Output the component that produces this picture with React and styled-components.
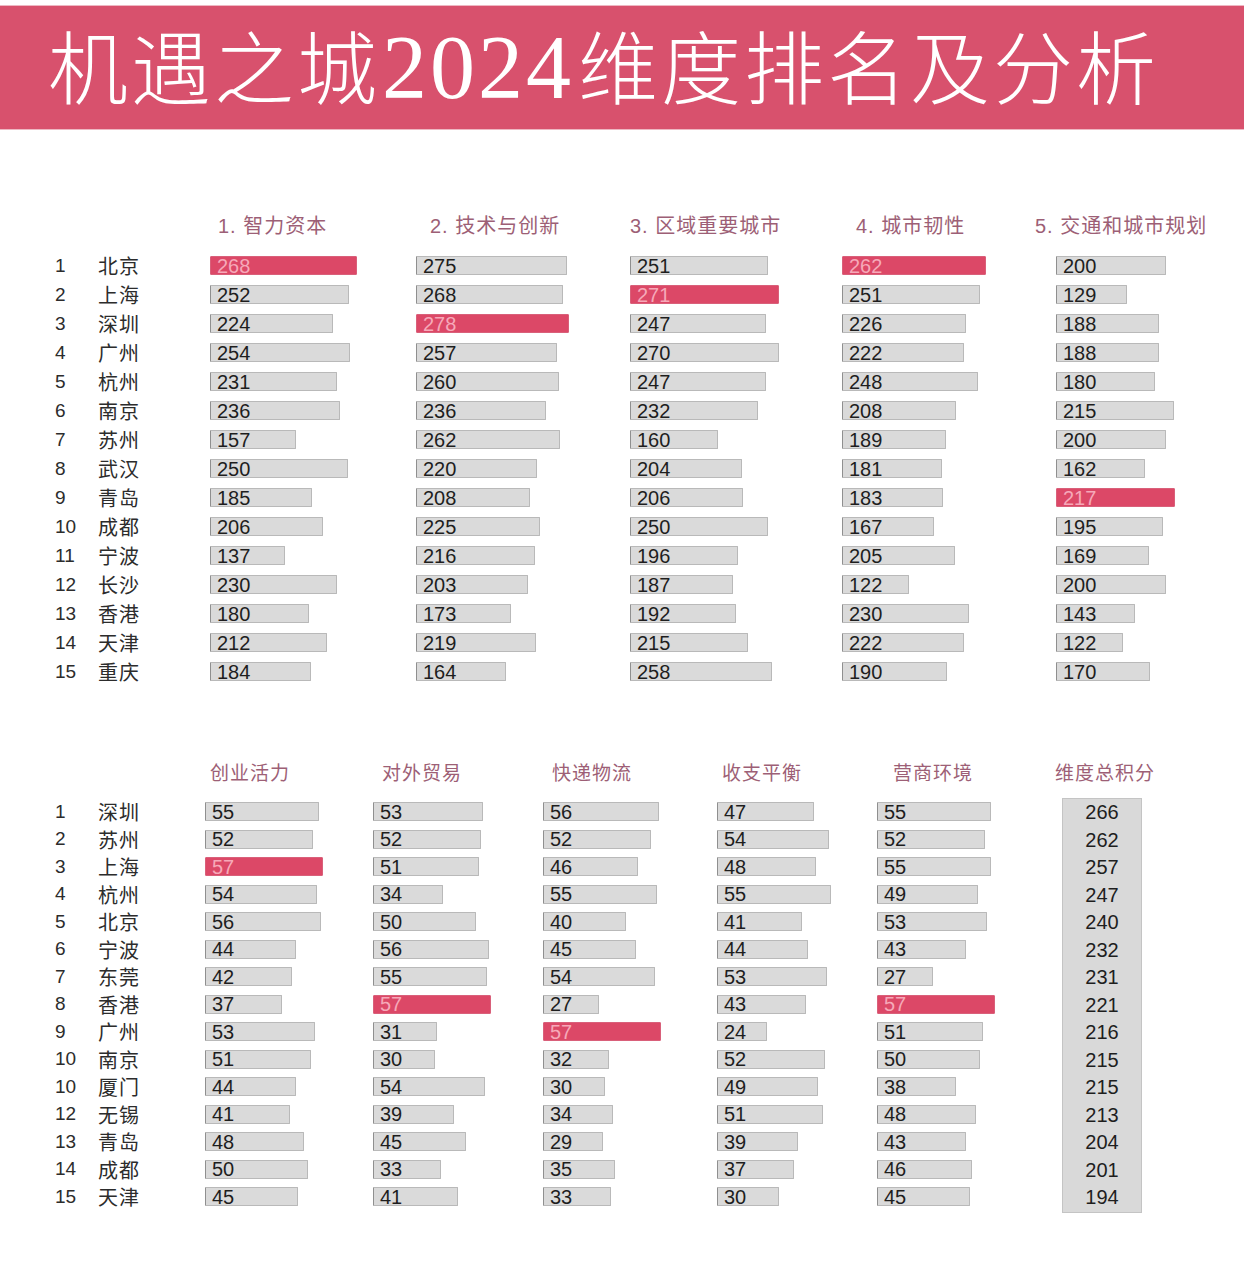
import React from 'react';
import styled, { createGlobalStyle } from 'styled-components';

const GlobalStyle = createGlobalStyle`
  body {
    margin: 0;
    background: #fff;
    font-family: 'Liberation Sans', 'Noto Sans CJK SC', sans-serif;
  }
`;

const Page = styled.div`
  width: 1244px;
  height: 1277px;
  padding-top: 5px;
  box-sizing: border-box;
  background: #fff;
`;

const Banner = styled.header`
  height: 125px;
  background: #d8516d;
  border-top: 1px solid #eeb7c2;
  border-bottom: 1px solid #eeb7c2;
  box-sizing: border-box;
  display: flex;
  align-items: center;
  padding-left: 48px;
  overflow: hidden;
`;

const Title = styled.h1`
  margin: 0;
  color: #fff;
  font-family: 'Noto Sans CJK SC', sans-serif;
  font-weight: 300;
  font-size: 80px;
  line-height: 1;
  letter-spacing: 3px;
  white-space: nowrap;
  display: flex;
  align-items: baseline;
`;

const Year = styled.span`
  font-family: 'Liberation Serif', 'DejaVu Serif', serif;
  font-weight: 400;
  font-size: 90px;
  letter-spacing: 3px;
  margin: 0 4px 0 2px;
`;

const Table = styled.section`
  display: flex;
  padding-left: 55px;
  margin-top: ${({ $top }) => $top}px;
`;

const Column = styled.div`
  display: flex;
  flex-direction: column;
  width: ${({ $w }) => ($w ? `${$w}px` : 'auto')};
  flex: ${({ $w }) => ($w ? 'none' : '1')};
`;

const Head = styled.div`
  height: ${({ $h }) => $h}px;
  line-height: 30px;
  padding-left: ${({ $offset }) => Math.max($offset || 0, 0)}px;
  margin-left: ${({ $offset }) => Math.min($offset || 0, 0)}px;
  font-family: 'Liberation Sans', 'Noto Sans CJK SC', sans-serif;
  font-size: ${({ $fs }) => $fs}px;
  letter-spacing: 1px;
  color: #9d5f76;
  white-space: nowrap;
`;

const Label = styled.div`
  height: ${({ $h }) => $h}px;
  display: flex;
  align-items: center;
  font-size: ${({ $cjk }) => ($cjk ? 20 : 19)}px;
  letter-spacing: ${({ $cjk }) => ($cjk ? 1 : 0)}px;
  color: #2c2c2c;
  font-family: 'Liberation Sans', 'Noto Sans CJK SC', sans-serif;
`;

const Row = styled.div`
  height: ${({ $h }) => $h}px;
  display: flex;
  align-items: center;
`;

const Bar = styled.div`
  height: 19px;
  box-sizing: border-box;
  display: flex;
  align-items: center;
  padding-left: 6px;
  font-size: 20px;
  line-height: 1;
  background: ${({ $hot }) => ($hot ? '#dc4867' : '#dadada')};
  border: 1px solid ${({ $hot }) => ($hot ? '#d9607a' : '#b9b9b9')};
  border-left-color: ${({ $hot }) => ($hot ? '#d9607a' : '#8f8f8f')};
  color: ${({ $hot }) => ($hot ? '#f6a9b9' : '#1e1e1e')};
  border-radius: 1px;
`;

const TotalBox = styled.div`
  width: 80px;
  margin-left: 7px;
  background: #d9d9d9;
  border: 1px solid #c4c4c4;
  box-sizing: border-box;
  display: flex;
  flex-direction: column;
  margin-top: 3px;
`;

const TotalValue = styled.div`
  height: ${({ $h }) => $h}px;
  display: flex;
  align-items: center;
  justify-content: center;
  font-size: 20px;
  color: #1e1e1e;
`;

const topCities = ['北京', '上海', '深圳', '广州', '杭州', '南京', '苏州', '武汉', '青岛', '成都', '宁波', '长沙', '香港', '天津', '重庆'];
const topRanks = Array.from({ length: 15 }, (_, i) => i + 1);

const topColumns = [
  { title: '1. 智力资本', w: 206, offset: 8, values: [268, 252, 224, 254, 231, 236, 157, 250, 185, 206, 137, 230, 180, 212, 184] },
  { title: '2. 技术与创新', w: 214, offset: 14, values: [275, 268, 278, 257, 260, 236, 262, 220, 208, 225, 216, 203, 173, 219, 164] },
  { title: '3. 区域重要城市', w: 212, offset: 0, values: [251, 271, 247, 270, 247, 232, 160, 204, 206, 250, 196, 187, 192, 215, 258] },
  { title: '4. 城市韧性', w: 214, offset: 14, values: [262, 251, 226, 222, 248, 208, 189, 181, 183, 167, 205, 122, 230, 222, 190] },
  { title: '5. 交通和城市规划', w: 0, offset: -21, values: [200, 129, 188, 188, 180, 215, 200, 162, 217, 195, 169, 200, 143, 122, 170] },
];

const bottomCities = ['深圳', '苏州', '上海', '杭州', '北京', '宁波', '东莞', '香港', '广州', '南京', '厦门', '无锡', '青岛', '成都', '天津'];
const bottomRanks = [1, 2, 3, 4, 5, 6, 7, 8, 9, 10, 10, 12, 13, 14, 15];

const bottomColumns = [
  { title: '创业活力', w: 168, offset: 5, hot: true, values: [55, 52, 57, 54, 56, 44, 42, 37, 53, 51, 44, 41, 48, 50, 45] },
  { title: '对外贸易', w: 170, offset: 9, hot: true, values: [53, 52, 51, 34, 50, 56, 55, 57, 31, 30, 54, 39, 45, 33, 41] },
  { title: '快递物流', w: 174, offset: 9, hot: true, values: [56, 52, 46, 55, 40, 45, 54, 27, 57, 32, 30, 34, 29, 35, 33] },
  { title: '收支平衡', w: 160, offset: 5, hot: false, values: [47, 54, 48, 55, 41, 44, 53, 43, 24, 52, 49, 51, 39, 37, 30] },
  { title: '营商环境', w: 178, offset: 16, hot: true, values: [55, 52, 55, 49, 53, 43, 27, 57, 51, 50, 38, 48, 43, 46, 45] },
];

const totals = [266, 262, 257, 247, 240, 232, 231, 221, 216, 215, 215, 213, 204, 201, 194];

const RankTable = ({ top, headH, rowH, headFs, ranks, cities, columns, scale, isHot, rankW, cityW, children }) => (
  <Table $top={top}>
    <Column $w={rankW}>
      <Head $h={headH} $fs={headFs} />
      {ranks.map((r, i) => (
        <Label key={i} $h={rowH}>{r}</Label>
      ))}
    </Column>
    <Column $w={cityW}>
      <Head $h={headH} $fs={headFs} />
      {cities.map((c, i) => (
        <Label key={i} $h={rowH} $cjk>{c}</Label>
      ))}
    </Column>
    {columns.map((col) => (
      <Column key={col.title} $w={col.w}>
        <Head $h={headH} $fs={headFs} $offset={col.offset}>{col.title}</Head>
        {col.values.map((v, i) => (
          <Row key={i} $h={rowH}>
            <Bar $hot={isHot(col, v)} style={{ width: Math.round(v * scale) }}>{v}</Bar>
          </Row>
        ))}
      </Column>
    ))}
    {children}
  </Table>
);

const App = () => {
  return (
    <Page>
      <GlobalStyle />
      <Banner>
        <Title>机遇之城<Year>2024</Year>维度排名及分析</Title>
      </Banner>

      <RankTable
        top={81}
        headH={40}
        rowH={29}
        headFs={20}
        ranks={topRanks}
        cities={topCities}
        columns={topColumns}
        scale={0.55}
        rankW={43}
        cityW={112}
        isHot={(col, v) => v === Math.max(...col.values)}
      />

      <RankTable
        top={73}
        headH={39}
        rowH={27.5}
        headFs={19}
        ranks={bottomRanks}
        cities={bottomCities}
        columns={bottomColumns}
        scale={2.07}
        rankW={43}
        cityW={107}
        isHot={(col, v) => col.hot && v === 57}
      >
        <Column $w={100}>
          <Head $h={36} $fs={19} $offset={0}>维度总积分</Head>
          <TotalBox>
            {totals.map((t, i) => (
              <TotalValue key={i} $h={27.5}>{t}</TotalValue>
            ))}
          </TotalBox>
        </Column>
      </RankTable>
    </Page>
  );
};

export default App;
